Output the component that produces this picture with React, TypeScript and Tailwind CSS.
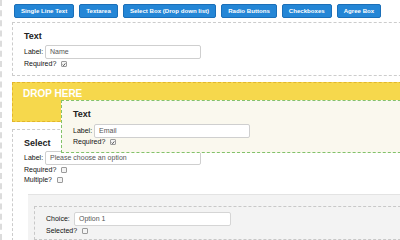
import React from 'react';

const buttons = [
  'Single Line Text',
  'Textarea',
  'Select Box (Drop down list)',
  'Radio Buttons',
  'Checkboxes',
  'Agree Box',
];

const Check: React.FC<{ checked?: boolean }> = ({ checked }) => (
  <span className="inline-flex h-[6px] w-[6px] items-center justify-center rounded-[1px] border border-[#9a9a9a] bg-[#f4f4f4]">
    {checked && (
      <svg viewBox="0 0 6 6" className="h-[5px] w-[5px]">
        <path d="M1 3.2 L2.4 4.6 L5 1.4" fill="none" stroke="#333" strokeWidth="1.2" />
      </svg>
    )}
  </span>
);

const Field: React.FC<{ label: string; value: string }> = ({ label, value }) => (
  <div className="flex items-center">
    <span className="w-[21px] text-[7px] text-[#111]">{label}</span>
    <div className="flex h-[14px] w-[156px] items-center rounded-[2px] border border-[#cfcfcf] bg-white pl-[4px] text-[7px] text-[#555]">
      {value}
    </div>
  </div>
);

const Flag: React.FC<{ label: string; checked?: boolean; className?: string }> = ({ label, checked, className = '' }) => (
  <div className={`flex h-[8px] items-center gap-[5px] text-[7px] leading-[8px] text-[#111] ${className}`}>
    <span>{label}</span>
    <Check checked={checked} />
  </div>
);

const App: React.FC = () => {
  return (
    <div className="relative h-[240px] w-[400px] overflow-hidden bg-white font-['Liberation_Sans',Arial,sans-serif]">
      <div className="h-full border-l-2 border-dashed border-[#dcdcdc] pl-[10px]">
        <div className="flex gap-[5px] pl-[2px] pt-[4px]">
          {buttons.map((b) => (
            <div
              key={b}
              className="flex h-[14px] shrink-0 items-center whitespace-nowrap rounded-[2px] border border-[#1b6fb8] bg-[#2486d6] px-[6px] text-[6.1px] font-bold text-white"
            >
              {b}
            </div>
          ))}
        </div>

        <div className="mt-[4px] w-[420px] border border-dashed border-[#cccccc] pb-[7px] pl-[11px] pt-[8px]">
          <div className="text-[9px] font-bold leading-[11px] text-[#222]">Text</div>
          <div className="mt-[3px]">
            <Field label="Label:" value="Name" />
          </div>
          <Flag label="Required?" checked className="mt-[1px]" />
        </div>

        <div className="mt-[6px] h-[40px] w-[420px] border border-dashed border-[#e2b62c] bg-[#f6d84c] pl-[10px] pt-[5px] text-[10px] font-bold leading-[12px] text-white">
          DROP HERE
        </div>

        <div className="mt-[7px] w-[420px] border border-dashed border-[#cccccc] pl-[11px] pt-[8px]">
          <div className="text-[9px] font-bold leading-[11px] text-[#222]">Select</div>
          <div className="mt-[2px]">
            <Field label="Label:" value="Please choose an option" />
          </div>
          <Flag label="Required?" className="mt-[1px]" />
          <Flag label="Multiple?" className="mt-[2px]" />
          <div className="ml-[4px] mt-[10px] border-t border-[#e3e3e3] bg-[#f3f3f3] pl-[6px] pt-[11px]">
            <div className="border border-dashed border-[#c8c8c8] pb-[4px] pl-[11px] pt-[5px]">
              <div className="flex items-center">
                <span className="w-[28px] text-[7px] text-[#111]">Choice:</span>
                <div className="flex h-[14px] w-[157px] items-center rounded-[2px] border border-[#d5d5d5] bg-white pl-[4px] text-[7px] text-[#555]">
                  Option 1
                </div>
              </div>
              <Flag label="Selected?" className="mt-[1px]" />
            </div>
          </div>
        </div>
      </div>

      <div className="absolute left-[61px] top-[100px] h-[53px] w-[360px] border border-dashed border-[#82c26a] bg-[#faf8ee] pl-[11px] pt-[8px]">
        <div className="text-[9px] font-bold leading-[11px] text-[#222]">Text</div>
        <div className="mt-[4px]">
          <Field label="Label:" value="Email" />
        </div>
        <Flag label="Required?" checked />
      </div>
    </div>
  );
};

export default App;
